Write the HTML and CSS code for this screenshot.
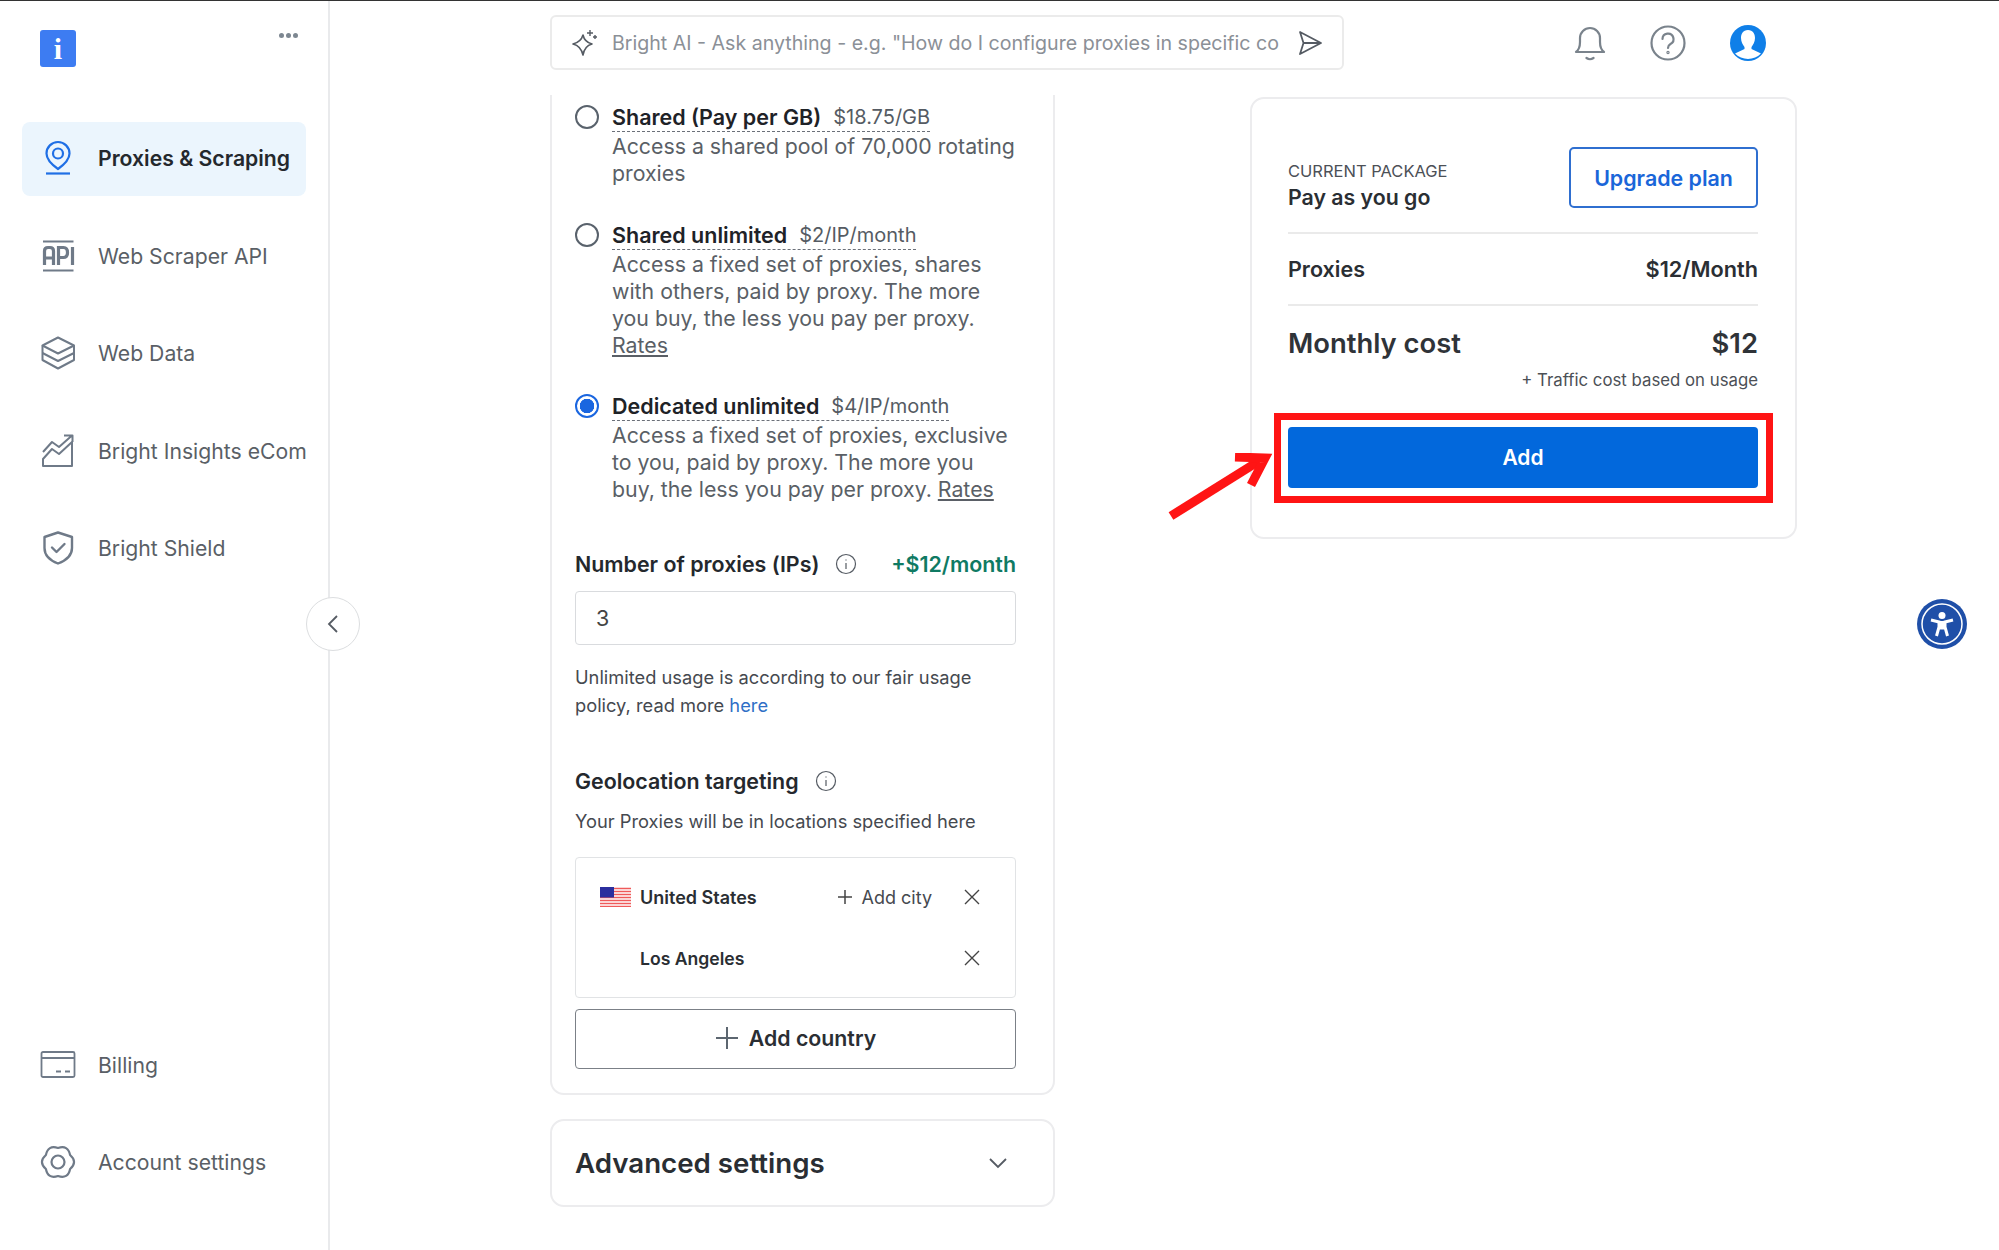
FILE: index.html
```html
<!DOCTYPE html>
<html lang="en">

<head>
    <meta charset="UTF-8">
    <title>Proxies &amp; Scraping</title>
    <link rel="stylesheet" href="styles.css">
</head>

<body>
    <div class="page">
        <aside class="sidebar">
            <div class="side-top">
                <div class="logo">i</div>
                <div class="dots"><span></span><span></span><span></span></div>
            </div>

            <nav class="nav-main">
                <a class="nav-item active">
                    <svg class="nav-icon" viewBox="0 0 36 36" fill="none" stroke="#1f6fe5" stroke-width="2.2">
                        <path d="M18 29 C11 24 6.500 19 6.500 13.500 A11.500 11.500 0 0 1 29.500 13.500 C29.500 19 25 24 18 29 Z"/>
                        <circle cx="18" cy="13.500" r="5"/>
                        <path d="M6 33.500 H30"/>
                    </svg>
                    <span>Proxies &amp; Scraping</span>
                </a>
                <a class="nav-item">
                    <svg class="nav-icon" viewBox="0 0 36 36" fill="none" stroke="#6f7a88" stroke-width="3.200">
                        <path d="M3 3.500 H33.500 M3 32.500 H33.500" stroke-width="2.200"/>
                        <path d="M4.500 27 V13 Q4.500 9.500 8 9.500 H10 Q13.500 9.500 13.500 13 V27 M4.500 20 H13.500"/>
                        <path d="M18.500 27 V9.500 H23.500 Q27.500 9.500 27.500 14.500 Q27.500 19.500 23.500 19.500 H18.500"/>
                        <path d="M32.500 9 V27"/>
                    </svg>
                    <span>Web Scraper API</span>
                </a>
                <a class="nav-item">
                    <svg class="nav-icon" viewBox="0 0 36 36" fill="none" stroke="#6f7a88" stroke-width="2" stroke-linejoin="round">
                        <path d="M18 2.500 L34 10.500 L18 18.500 L2.500 10.500 Z"/>
                        <path d="M2.500 10.500 V25 L18 33.500 L34 25 V10.500"/>
                        <path d="M2.500 18 L18 26 L34 18"/>
                    </svg>
                    <span>Web Data</span>
                </a>
                <a class="nav-item">
                    <svg class="nav-icon" viewBox="0 0 36 36" fill="none" stroke="#6f7a88" stroke-width="2" stroke-linejoin="round">
                        <path d="M3 33 V26 L12 16 L19 21 L32 9 V33 Z"/>
                        <path d="M3 19 L12 9 L19 14 L32 2.500 M24 2.500 H32.500 V9"/>
                    </svg>
                    <span>Bright Insights eCom</span>
                </a>
                <a class="nav-item">
                    <svg class="nav-icon" viewBox="0 0 36 36" fill="none" stroke="#6f7a88" stroke-width="2.400" stroke-linejoin="round" stroke-linecap="round">
                        <path d="M18 2.500 L32 7 V18 C32 25 26 30.500 18 33.500 C10 30.500 4.500 25 4.500 18 V7 Z"/>
                        <path d="M12 17.500 L16.500 22 L24.500 14"/>
                    </svg>
                    <span>Bright Shield</span>
                </a>
            </nav>

            <nav class="nav-bottom">
                <a class="nav-item">
                    <svg class="nav-icon" viewBox="0 0 36 36" fill="none" stroke="#6f7a88" stroke-width="1.800">
                        <rect x="1.500" y="5" width="33" height="25" rx="1.500"/>
                        <path d="M1.500 11 H34.500"/>
                        <path d="M16 24.500 H21 M25 24.500 H30"/>
                    </svg>
                    <span>Billing</span>
                </a>
                <a class="nav-item">
                    <svg class="nav-icon" viewBox="0 0 36 36" fill="none" stroke="#6f7a88" stroke-width="2.200" stroke-linejoin="round">
                        <path d="M18 4 Q8 0.700 5.900 11 Q-2 18 5.900 25 Q8 35.300 18 32 Q28 35.300 30.100 25 Q38 18 30.100 11 Q28 0.700 18 4 Z"/>
                        <circle cx="18" cy="18" r="6.500"/>
                    </svg>
                    <span>Account settings</span>
                </a>
            </nav>

            <button class="collapse-btn">
                <svg width="14" height="20" viewBox="0 0 14 20" fill="none" stroke="#555b63" stroke-width="1.800"><path d="M11 2 L3 10 L11 18"/></svg>
            </button>
        </aside>

        <main class="main">
            <header class="topbar">
                <div class="search">
                    <svg class="search-star" width="32" height="32" viewBox="0 0 32 32" fill="none" stroke="#555b63" stroke-width="1.600" stroke-linejoin="round">
                        <path d="M13 8 Q14.500 15 22 17 Q14.500 19 13 28 Q11 19 3 17 Q11 15 13 8 Z"/>
                        <path d="M20 3 V9 M17 6 H23 M25 8 V12 M23 10 H27" stroke-width="1.400"/>
                    </svg>
                    <span class="search-text">Bright AI - Ask anything - e.g. "How do I configure proxies in specific co</span>
                    <svg width="28" height="28" viewBox="0 0 28 28" fill="none" stroke="#555b63" stroke-width="1.800" stroke-linejoin="round">
                        <path d="M4 3 L25 14 L4 25 L7.500 14 Z"/>
                        <path d="M7.500 14 H25"/>
                    </svg>
                </div>
                <div class="top-icons">
                    <svg class="top-icon" viewBox="0 0 36 36" fill="none" stroke="#7a838c" stroke-width="2.200" stroke-linejoin="round" stroke-linecap="round">
                        <path d="M4 27 Q8 24 8 17 V13 A10 10 0 0 1 28 13 V17 Q28 24 32 27 Z"/>
                        <path d="M14.500 33 Q18 35.500 21.500 33"/>
                    </svg>
                    <svg class="top-icon" viewBox="0 0 36 36" fill="none" stroke="#7a838c" stroke-width="2.200" stroke-linecap="round">
                        <circle cx="18" cy="18" r="16.500"/>
                        <path d="M12.500 14 A5.500 5.500 0 1 1 20.500 19 Q18 20.500 18 23"/>
                        <circle cx="18" cy="27.500" r="0.600"/>
                    </svg>
                    <svg class="top-icon avatar" viewBox="0 0 36 36">
                        <circle cx="18" cy="18" r="18" fill="#0f7fe8"/>
                        <path d="M18 5 C23 5 25 9 25 13 C25 17 23 20 21.500 22 V24 L31 28.500 A18 18 0 0 1 5 28.500 L14.500 24 V22 C13 20 11 17 11 13 C11 9 13 5 18 5 Z" fill="#fff"/>
                    </svg>
                </div>
            </header>

            <div class="content">
                <div class="left-col">
                    <section class="plan-card">
                        <div class="plan">
                            <span class="radio"></span>
                            <div class="plan-body">
                                <div class="plan-title"><b>Shared (Pay per GB)</b><span>$18.75/GB</span></div>
                                <p>Access a shared pool of 70,000 rotating proxies</p>
                            </div>
                        </div>
                        <div class="plan">
                            <span class="radio"></span>
                            <div class="plan-body">
                                <div class="plan-title"><b>Shared unlimited</b><span>$2/IP/month</span></div>
                                <p>Access a fixed set of proxies, shares with others, paid by proxy. The more you buy, the less you pay per proxy. <a>Rates</a></p>
                            </div>
                        </div>
                        <div class="plan">
                            <span class="radio checked"></span>
                            <div class="plan-body">
                                <div class="plan-title"><b>Dedicated unlimited</b><span>$4/IP/month</span></div>
                                <p>Access a fixed set of proxies, exclusive to you, paid by proxy. The more you buy, the less you pay per proxy. <a>Rates</a></p>
                            </div>
                        </div>

                        <div class="field-head proxies-head">
                            <b>Number of proxies (IPs)</b>
                            <svg class="info" viewBox="0 0 22 22" fill="none" stroke="#555b63" stroke-width="1.200"><circle cx="11" cy="11" r="9.500"/><path d="M11 10 V16 M11 6.500 V7.500"/></svg>
                            <span class="price-add">+$12/month</span>
                        </div>
                        <div class="number-input">3</div>
                        <p class="note">Unlimited usage is according to our fair usage policy, read more <a>here</a></p>

                        <div class="field-head geo-head">
                            <b>Geolocation targeting</b>
                            <svg class="info" viewBox="0 0 22 22" fill="none" stroke="#555b63" stroke-width="1.200"><circle cx="11" cy="11" r="9.500"/><path d="M11 10 V16 M11 6.500 V7.500"/></svg>
                        </div>
                        <p class="geo-sub">Your Proxies will be in locations specified here</p>

                        <div class="geo-box">
                            <div class="geo-row">
                                <svg class="flag" viewBox="0 0 31 20">
                                    <rect width="31" height="20" fill="#fff"/>
                                    <path d="M0 1.500 H31 M0 4.500 H31 M0 7.500 H31 M0 10.500 H31 M0 13.500 H31 M0 16.500 H31 M0 19.500 H31" stroke="#ef5a5a" stroke-width="1.500"/>
                                    <rect width="14" height="10.500" fill="#2b2f9e"/>
                                </svg>
                                <span class="geo-name">United States</span>
                                <span class="add-city">
                                    <svg width="16" height="16" viewBox="0 0 16 16" stroke="#444" stroke-width="1.500"><path d="M8 1 V15 M1 8 H15"/></svg>
                                    Add city
                                </span>
                                <svg class="close" viewBox="0 0 18 18" stroke="#444" stroke-width="1.400"><path d="M2 2 L16 16 M16 2 L2 16"/></svg>
                            </div>
                            <div class="geo-row">
                                <span class="geo-name city">Los Angeles</span>
                                <svg class="close" viewBox="0 0 18 18" stroke="#444" stroke-width="1.400"><path d="M2 2 L16 16 M16 2 L2 16"/></svg>
                            </div>
                        </div>

                        <button class="add-country">
                            <svg width="24" height="24" viewBox="0 0 24 24" stroke="#5c6670" stroke-width="2"><path d="M12 1 V23 M1 12 H23"/></svg>
                            Add country
                        </button>
                    </section>

                    <section class="advanced">
                        <span>Advanced settings</span>
                        <svg width="20" height="12" viewBox="0 0 20 12" fill="none" stroke="#555b63" stroke-width="1.800"><path d="M2 2 L10 10 L18 2"/></svg>
                    </section>
                </div>

                <section class="summary">
                    <div class="summary-head">
                        <div class="pack">
                            <div class="pack-label">CURRENT PACKAGE</div>
                            <div class="pack-name">Pay as you go</div>
                        </div>
                        <button class="upgrade">Upgrade plan</button>
                    </div>
                    <div class="summary-row">
                        <span>Proxies</span>
                        <span class="row-price">$12/Month</span>
                    </div>
                    <div class="cost-row">
                        <span>Monthly cost</span>
                        <span>$12</span>
                    </div>
                    <div class="traffic">+ Traffic cost based on usage</div>
                    <div class="highlight">
                        <button class="add-btn">Add</button>
                        <svg class="arrow" width="110" height="70" viewBox="0 0 110 70" fill="none" stroke="#ff1414" stroke-width="9">
                            <path d="M6 63 L94 8"/>
                            <path d="M70 4 L100 5 L86 32" stroke-linejoin="miter"/>
                        </svg>
                    </div>
                </section>
            </div>
        </main>

        <button class="access-btn">
            <svg width="46" height="46" viewBox="0 0 46 46">
                <circle cx="23" cy="23" r="20" fill="none" stroke="#fff" stroke-width="1.500"/>
                <circle cx="23" cy="14.500" r="3.500" fill="#fff"/>
                <path d="M12 19 L20 21 V26 L17.500 35 M34 19 L26 21 V26 L28.500 35 M20 27 H26" fill="none" stroke="#fff" stroke-width="3"/>
                <path d="M20 20 H26 V28 H20 Z" fill="#fff"/>
            </svg>
        </button>
    </div>
</body>

</html>
```
FILE: styles.css
```css
/* base */
* {
    box-sizing: border-box;
}

html,
body {
    margin: 0;
    height: 100%;
}

body {
    font-family: "Inter", "Liberation Sans", sans-serif;
    color: #24282d;
    background-color: #fff;
    overflow: hidden;
}

p {
    margin: 0;
}

button {
    font-family: inherit;
    cursor: pointer;
}

.page {
    display: flex;
    height: 1250px;
    border-top: 1px solid #333;
    position: relative;
}

/* sidebar */
.sidebar {
    position: relative;
    flex: 0 0 330px;
    display: flex;
    flex-direction: column;
    border-right: 2px solid #e9eaec;
}

.side-top {
    display: flex;
    justify-content: space-between;
    align-items: flex-start;
    padding: 29px 30px 0 40px;
    height: 121px;
}

.logo {
    width: 36px;
    height: 37px;
    border-radius: 3px;
    background-color: #3d7cf2;
    color: #fff;
    font-family: "Liberation Serif", serif;
    font-weight: bold;
    font-size: 30px;
    line-height: 37px;
    text-align: center;
}

.dots {
    display: flex;
    gap: 2px;
    margin-top: 3px;
}

.dots span {
    width: 5px;
    height: 5px;
    border-radius: 50%;
    background-color: #7d8791;
}

.nav-main,
.nav-bottom {
    display: flex;
    flex-direction: column;
    gap: 23.500px;
}

.nav-bottom {
    margin-top: auto;
    padding-bottom: 50px;
}

.nav-item {
    display: flex;
    align-items: center;
    gap: 22px;
    width: 284px;
    height: 74px;
    margin-left: 22px;
    padding-left: 18px;
    padding-bottom: 2px;
    border-radius: 8px;
    font-size: 21.200px;
    color: #5a5f66;
    white-space: nowrap;
}

.nav-item.active {
    background-color: #ebf5fd;
    color: #24282d;
    font-weight: 600;
}

.nav-icon {
    flex: none;
    width: 36px;
    height: 36px;
}

.collapse-btn {
    position: absolute;
    top: 596px;
    left: 306px;
    width: 54px;
    height: 54px;
    display: flex;
    align-items: center;
    justify-content: center;
    border: 1px solid #dcdee0;
    border-radius: 50%;
    background-color: #fff;
}

/* top bar */
.main {
    flex: 1;
    min-width: 0;
    display: flex;
    flex-direction: column;
}

.topbar {
    display: flex;
    align-items: flex-start;
    height: 94px;
    padding: 14px 0 0 220px;
}

.search {
    display: flex;
    align-items: center;
    width: 794px;
    height: 55px;
    padding: 0 18px 0 18px;
    border: 2px solid #ebebeb;
    border-radius: 6px;
    overflow: hidden;
}

.search-star {
    flex: none;
    margin-right: 10px;
}

.search-text {
    flex: 1;
    font-size: 19.600px;
    color: #8b9097;
    white-space: nowrap;
}

.search svg:last-child {
    flex: none;
    margin-left: 12px;
}

.top-icons {
    display: flex;
    gap: 42px;
    margin-left: 228px;
    padding-top: 10px;
}

.top-icon {
    width: 36px;
    height: 36px;
}

.avatar {
    margin-left: 2px;
}

/* layout of the two columns */
.content {
    display: flex;
    align-items: flex-start;
    gap: 195px;
    padding-left: 220px;
}

.left-col {
    width: 505px;
}

/* plan list */
.plan-card {
    padding: 9px 37px 24px 23px;
    border: 2px solid #ececee;
    border-top: none;
    border-radius: 0 0 14px 14px;
}

.plan {
    display: flex;
    gap: 13px;
    margin-bottom: 34.500px;
}

.plan:nth-child(3) {
    margin-bottom: 0;
}

.radio {
    flex: none;
    width: 24px;
    height: 24px;
    margin-top: 1px;
    border: 2px solid #59626c;
    border-radius: 50%;
}

.radio.checked {
    border-color: #1a66e0;
    background: radial-gradient(circle, #1a66e0 0 7px, #fff 7.500px);
}

.plan-title {
    display: inline-flex;
    gap: 12px;
    height: 28px;
    line-height: 26px;
    border-bottom: 1px dashed #6b7079;
    font-size: 21.500px;
    white-space: nowrap;
}

.plan-title b {
    font-weight: 600;
    color: #1e2227;
}

.plan-title span {
    font-size: 20px;
    color: #555b63;
}

.plan-body p {
    margin-top: 1px;
    font-size: 21.300px;
    line-height: 27px;
    color: #5a5f66;
}

.plan-body a {
    color: #5a5f66;
    text-decoration: underline;
}

/* proxy count and geolocation */
.field-head {
    display: flex;
    align-items: center;
    height: 26px;
    font-size: 21.400px;
}

.field-head b {
    font-weight: 600;
}

.proxies-head {
    margin-top: 48px;
}

.info {
    width: 22px;
    height: 22px;
    margin-left: 16px;
}

.price-add {
    margin-left: auto;
    font-weight: 600;
    color: #0f7a63;
}

.number-input {
    height: 54px;
    margin-top: 14px;
    padding-left: 20px;
    border: 1px solid #d9dbde;
    border-radius: 4px;
    font-size: 21.500px;
    line-height: 52px;
    color: #444;
}

.note {
    margin-top: 18px;
    font-size: 18.300px;
    line-height: 28px;
    color: #45494f;
}

.note a {
    color: #2f6fc6;
}

.geo-head {
    margin-top: 49px;
}

.geo-sub {
    margin-top: 14px;
    font-size: 18.300px;
    line-height: 26px;
    color: #45494f;
}

.geo-box {
    display: flex;
    flex-direction: column;
    gap: 21px;
    height: 141px;
    margin-top: 23px;
    padding: 19px 34px 0 24px;
    border: 1px solid #e1e3e5;
    border-radius: 4px;
}

.geo-row {
    display: flex;
    align-items: center;
    height: 40px;
}

.flag {
    flex: none;
    width: 31px;
    height: 20px;
    margin-right: 9px;
}

.geo-name {
    font-size: 18px;
    font-weight: 600;
    color: #2a2e33;
}

.geo-name.city {
    margin-left: 40px;
    font-size: 17.600px;
}

.add-city {
    display: flex;
    align-items: center;
    gap: 8px;
    margin-left: auto;
    margin-right: 31px;
    font-size: 18px;
    color: #45494f;
}

.close {
    flex: none;
    width: 18px;
    height: 18px;
    margin-left: auto;
}

.add-city + .close {
    margin-left: 0;
}

.add-country {
    display: flex;
    align-items: center;
    justify-content: center;
    gap: 10px;
    width: 100%;
    height: 60px;
    margin-top: 11px;
    padding-bottom: 3px;
    border: 1px solid #7b8087;
    border-radius: 4px;
    background-color: #fff;
    font-size: 21.300px;
    font-weight: 600;
    color: #2a2e33;
}

.advanced {
    display: flex;
    align-items: center;
    justify-content: space-between;
    height: 88px;
    margin-top: 24px;
    padding: 0 45px 0 23px;
    border: 2px solid #ececee;
    border-radius: 14px;
    font-size: 27.700px;
    font-weight: 600;
    color: #2a2e33;
}

/* summary card */
.summary {
    width: 547px;
    height: 442px;
    margin-top: 2px;
    padding: 48px 37px 0 36px;
    border: 2px solid #ececee;
    border-radius: 14px;
}

.summary-head {
    display: flex;
    justify-content: space-between;
    align-items: flex-start;
    height: 87px;
    border-bottom: 2px solid #eaeaea;
}

.pack {
    padding-top: 12px;
}

.pack-label {
    font-size: 16.500px;
    line-height: 24px;
    color: #4c5056;
}

.pack-name {
    font-size: 21.300px;
    font-weight: 600;
    line-height: 28px;
    color: #2a2e33;
}

.upgrade {
    width: 189px;
    height: 61px;
    border: 2px solid #2f6fd0;
    border-radius: 5px;
    background-color: #fff;
    color: #1a66d9;
    font-size: 21.400px;
    font-weight: 600;
}

.summary-row {
    display: flex;
    justify-content: space-between;
    align-items: center;
    height: 72px;
    border-bottom: 2px solid #eaeaea;
    font-size: 21.500px;
    font-weight: 600;
    color: #2a2e33;
}

.row-price {
    font-size: 21.700px;
}

.cost-row {
    display: flex;
    justify-content: space-between;
    margin-top: 19px;
    font-size: 27.400px;
    line-height: 36px;
    font-weight: 600;
    color: #2f3338;
}

.traffic {
    margin-top: 7px;
    font-size: 16.800px;
    line-height: 24px;
    text-align: right;
    color: #4c5056;
}

.highlight {
    position: relative;
    margin: 21px -15px 0 -14px;
    padding: 7px 8px 8px 7px;
    border: 7px solid #ff1414;
}

.add-btn {
    display: block;
    width: 100%;
    height: 61px;
    border: none;
    border-radius: 4px;
    background-color: #0268dc;
    color: #fff;
    font-size: 21px;
    font-weight: 600;
}

.arrow {
    position: absolute;
    left: -116px;
    top: 33px;
}

/* accessibility widget */
.access-btn {
    position: absolute;
    top: 598px;
    left: 1917px;
    width: 50px;
    height: 50px;
    display: flex;
    align-items: center;
    justify-content: center;
    padding: 0;
    border: none;
    border-radius: 50%;
    background-color: #1f4fa8;
}
```
